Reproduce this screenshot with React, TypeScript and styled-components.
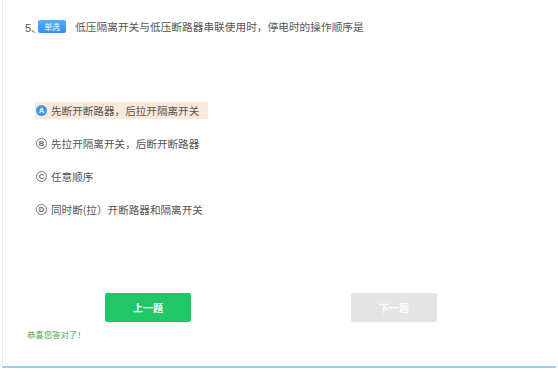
import styled, { createGlobalStyle } from "styled-components";

const GlobalStyle = createGlobalStyle`
  html, body {
    margin: 0;
    padding: 0;
    background: #fff;
    font-family: "Noto Sans CJK SC", "Liberation Sans", sans-serif;
  }
`;

const Panel = styled.div`
  margin-left: 2px;
  width: 554px;
  height: 368px;
  box-sizing: border-box;
  border-left: 1px solid #ececec;
  border-bottom: 2px solid #92d1f8;
  display: flex;
  flex-direction: column;
  padding: 19px 0 0 22px;
`;

const Question = styled.div`
  display: flex;
  align-items: center;
  height: 15px;
  font-size: 10.7px;
  color: #555;
`;

const Number = styled.span`
  font-family: "Liberation Sans", "Noto Sans CJK SC", sans-serif;
  font-size: 11px;
  margin-right: -4px;
`;

const Badge = styled.span`
  display: inline-flex;
  align-items: center;
  justify-content: center;
  width: 28px;
  height: 13px;
  border-radius: 2px;
  background: linear-gradient(#55aef6, #3590ec);
  color: #fff;
  font-size: 8px;
  margin-right: 9px;
`;

const Options = styled.ul`
  list-style: none;
  margin: 68px 0 0 10px;
  padding: 0;
  display: flex;
  flex-direction: column;
  gap: 16px;
`;

const Option = styled.li<{ $picked?: boolean }>`
  display: flex;
  align-items: center;
  align-self: flex-start;
  height: 17px;
  padding: 0 9px 0 1px;
  background: ${(p) => (p.$picked ? "#fde8da" : "transparent")};
  font-size: 10.6px;
  color: #555;
`;

const Mark = styled.span<{ $picked?: boolean }>`
  display: inline-flex;
  align-items: center;
  justify-content: center;
  width: 11px;
  height: 11px;
  border-radius: 50%;
  box-sizing: border-box;
  margin-right: 4px;
  font-family: "Liberation Sans", sans-serif;
  font-size: 7.5px;
  font-weight: bold;
  border: ${(p) => (p.$picked ? "none" : "1px solid #777")};
  background: ${(p) => (p.$picked ? "#3a9cf1" : "#fff")};
  color: ${(p) => (p.$picked ? "#fff" : "#666")};
`;

const ButtonRow = styled.div`
  display: flex;
  margin-top: auto;
  padding-left: 80px;
  gap: 160px;
`;

const Button = styled.div<{ $active?: boolean }>`
  width: 86px;
  height: 29px;
  border-radius: 2px;
  display: flex;
  align-items: center;
  justify-content: center;
  color: #fff;
  font-size: 10px;
  font-weight: bold;
  background: ${(p) => (p.$active ? "#21c765" : "#e4e4e4")};
`;

const Message = styled.div`
  margin: 6px 0 26px 2px;
  font-size: 8.4px;
  color: #47a648;
`;

const options = [
  { key: "A", text: "先断开断路器，后拉开隔离开关", picked: true },
  { key: "B", text: "先拉开隔离开关，后断开断路器" },
  { key: "C", text: "任意顺序" },
  { key: "D", text: "同时断(拉）开断路器和隔离开关" },
];

const App = () => {
  return (
    <>
      <GlobalStyle />
      <Panel>
        <Question>
          <Number>5、</Number>
          <Badge>单选</Badge>
          低压隔离开关与低压断路器串联使用时，停电时的操作顺序是
        </Question>
        <Options>
          {options.map((o) => (
            <Option key={o.key} $picked={o.picked}>
              <Mark $picked={o.picked}>{o.key}</Mark>
              {o.text}
            </Option>
          ))}
        </Options>
        <ButtonRow>
          <Button $active>上一题</Button>
          <Button>下一题</Button>
        </ButtonRow>
        <Message>恭喜您答对了！</Message>
      </Panel>
    </>
  );
};

export default App;
